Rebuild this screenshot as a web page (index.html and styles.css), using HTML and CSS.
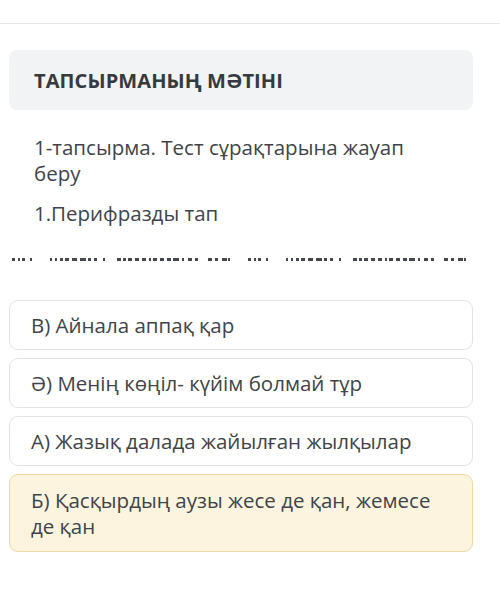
FILE: index.html
```html
<!DOCTYPE html>
<html>
<head>
  <title>Тапсырма</title>
  <link rel="stylesheet" href="styles.css">
</head>
<body>
  <div class="topbar"></div>
  <div class="task">
    <div class="task-head">
      <h2>ТАПСЫРМАНЫҢ МӘТІНІ</h2>
    </div>

    <div class="task-body">
      <p class="task-title">1-тапсырма. Тест сұрақтарына жауап беру</p>
      <p class="task-question">1.Перифразды тап</p>
    </div>

    <svg class="clipped-line" width="464" height="4" viewBox="0 0 464 4">
      <g fill="#45484c">
        <rect x="3" y="0" width="3" height="3"/><rect x="9" y="0" width="2" height="3"/><rect x="13" y="0" width="3" height="3"/><rect x="21" y="0" width="2" height="3"/>
        <rect x="41" y="0" width="2" height="3"/><rect x="46" y="0" width="2" height="3"/><rect x="51" y="0" width="3" height="3"/><rect x="56" y="0" width="4" height="3"/><rect x="63" y="0" width="5" height="3"/><rect x="71" y="0" width="6" height="3"/><rect x="79" y="0" width="3" height="3"/><rect x="85" y="0" width="3" height="3"/><rect x="94" y="0" width="2" height="3"/>
        <rect x="108" y="0" width="4" height="3"/><rect x="114" y="0" width="3" height="3"/><rect x="119" y="0" width="4" height="3"/><rect x="126" y="0" width="4" height="3"/><rect x="133" y="0" width="4" height="3"/><rect x="140" y="0" width="2" height="3"/><rect x="144" y="0" width="4" height="3"/><rect x="151" y="0" width="4" height="3"/><rect x="158" y="0" width="4" height="3"/><rect x="164" y="0" width="6" height="3"/><rect x="173" y="0" width="2" height="3"/>
        <rect x="179" y="0" width="4" height="3"/><rect x="186" y="0" width="3" height="3"/><rect x="199" y="0" width="4" height="3"/><rect x="206" y="0" width="3" height="3"/><rect x="213" y="0" width="5" height="3"/><rect x="219" y="0" width="2" height="3"/>
      </g>
      <g fill="#45484c" transform="translate(236 0)">
        <rect x="3" y="0" width="3" height="3"/><rect x="9" y="0" width="2" height="3"/><rect x="13" y="0" width="3" height="3"/><rect x="21" y="0" width="2" height="3"/>
        <rect x="41" y="0" width="2" height="3"/><rect x="46" y="0" width="2" height="3"/><rect x="51" y="0" width="3" height="3"/><rect x="56" y="0" width="4" height="3"/><rect x="63" y="0" width="5" height="3"/><rect x="71" y="0" width="6" height="3"/><rect x="79" y="0" width="3" height="3"/><rect x="85" y="0" width="3" height="3"/><rect x="94" y="0" width="2" height="3"/>
        <rect x="108" y="0" width="4" height="3"/><rect x="114" y="0" width="3" height="3"/><rect x="119" y="0" width="4" height="3"/><rect x="126" y="0" width="4" height="3"/><rect x="133" y="0" width="4" height="3"/><rect x="140" y="0" width="2" height="3"/><rect x="144" y="0" width="4" height="3"/><rect x="151" y="0" width="4" height="3"/><rect x="158" y="0" width="4" height="3"/><rect x="164" y="0" width="6" height="3"/><rect x="173" y="0" width="2" height="3"/>
        <rect x="179" y="0" width="4" height="3"/><rect x="186" y="0" width="3" height="3"/><rect x="199" y="0" width="4" height="3"/><rect x="206" y="0" width="3" height="3"/><rect x="213" y="0" width="5" height="3"/><rect x="219" y="0" width="2" height="3"/>
      </g>
    </svg>

    <div class="options">
      <div class="option">В) Айнала аппақ қар</div>
      <div class="option">Ә) Менің көңіл- күйім болмай тұр</div>
      <div class="option">А) Жазық далада жайылған жылқылар</div>
      <div class="option selected">Б) Қасқырдың аузы жесе де қан, жемесе де қан</div>
    </div>
  </div>
</body>
</html>
```

FILE: styles.css
```css
body {
  margin: 0;
  background: white;
  font-family: 'Open Sans', 'Noto Sans', Arial, sans-serif;
  color: #404449;
}

.topbar {
  height: 23px;
  border-bottom: 1px solid #e6e7e9;
}

.task {
  padding: 26px 27px 40px 9px;
}

.task-head {
  background: #f2f3f5;
  border-radius: 8px;
  height: 60px;
  display: flex;
  align-items: center;
  padding: 0 25px;
}

.task-head h2 {
  margin: 0;
  font-size: 20px;
  font-weight: 700;
  color: #363a3e;
  letter-spacing: 0.1px;
}

.task-body {
  padding: 24px 50px 0 25px;
}

.task-body p {
  margin: 0;
  font-size: 20.5px;
  line-height: 26px;
}

.task-question {
  margin-top: 14px !important;
}

.clipped-line {
  display: block;
  margin: 32px 0 0 0;
}

.options {
  display: flex;
  flex-direction: column;
  gap: 8px;
  margin-top: 38px;
}

.option {
  border: 1px solid #e1e3e6;
  border-radius: 9px;
  padding: 11px 30px 11px 21px;
  font-size: 20.5px;
  line-height: 26px;
  color: #404449;
}

.option.selected {
  background: #fcf4df;
  border-color: #eedaa2;
  padding-top: 12px;
  padding-bottom: 12px;
}
```
